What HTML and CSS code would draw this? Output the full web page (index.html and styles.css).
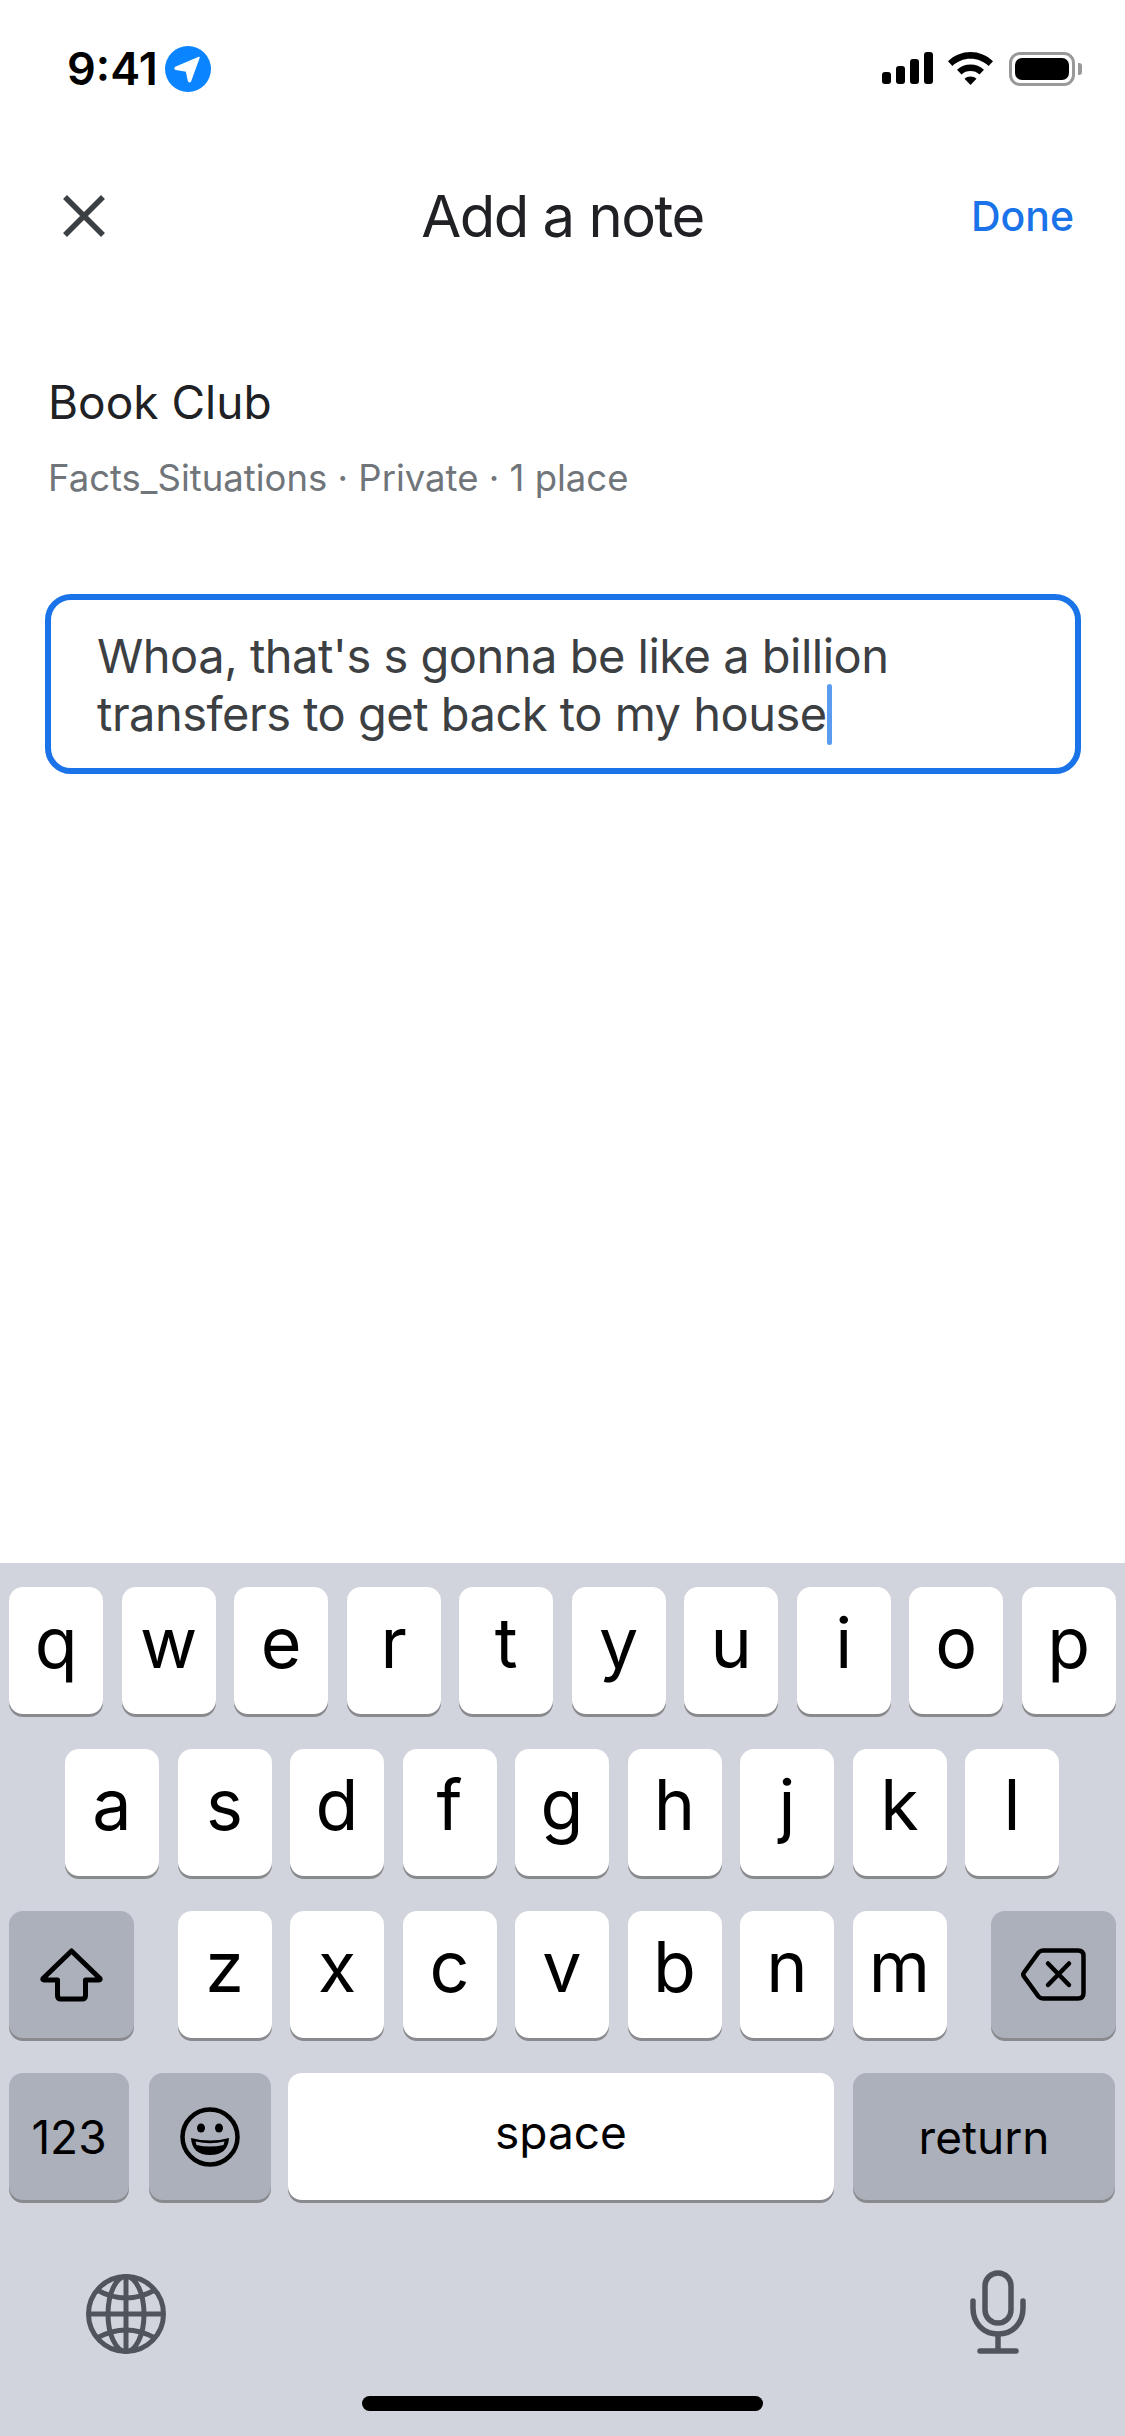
FILE: index.html
```html
<!DOCTYPE html>
<html lang="en">

<head>
    <meta charset="UTF-8">
    <meta name="viewport" content="width=device-width, initial-scale=1.0">
    <title>Add a note</title>
    <link rel="stylesheet" href="styles.css">
</head>

<body>
    <div class="screen">
        <div class="status-bar">
            <div class="status-left">
                <span class="clock">9:41</span>
                <svg class="location" width="46" height="46" viewBox="0 0 46 46">
                    <circle cx="23" cy="23" r="23" fill="#0a84ff" />
                    <path d="M34 11.5 L10.5 21.5 Q9.5 22.6 11 23.2 L21.5 25 L23.6 35 Q24.4 36.4 25.4 35.2 Z" fill="#fff" stroke="#fff" stroke-width="1.5" stroke-linejoin="round" />
                </svg>
            </div>
            <div class="status-right">
                <svg width="51" height="32" viewBox="0 0 51 32">
                    <rect x="0" y="20" width="9" height="12" rx="3" />
                    <rect x="14" y="14" width="9" height="18" rx="3" />
                    <rect x="28" y="7" width="9" height="25" rx="3" />
                    <rect x="42" y="0" width="9" height="32" rx="3" />
                </svg>
                <svg class="wifi" width="45" height="33" viewBox="0 0 45 33">
                    <path d="M22.5 0 C31 0 39 3.4 45 9.2 L40.6 14 C35.8 9.4 29.4 6.8 22.5 6.8 C15.6 6.8 9.2 9.4 4.4 14 L0 9.2 C6 3.4 14 0 22.5 0 Z" />
                    <path d="M22.5 12.4 C27.6 12.4 32.3 14.3 36 17.7 L31.5 22.4 C29.1 20.2 25.9 19 22.5 19 C19.1 19 15.9 20.2 13.5 22.4 L9 17.7 C12.7 14.3 17.4 12.4 22.5 12.4 Z" />
                    <path d="M22.5 24.5 C24.8 24.5 26.9 25.3 28.5 26.7 L22.5 33 L16.5 26.7 C18.1 25.3 20.2 24.5 22.5 24.5 Z" />
                </svg>
                <div class="battery">
                    <div class="battery-fill"></div>
                </div>
                <div class="battery-nub"></div>
            </div>
        </div>

        <div class="header">
            <svg class="close-icon" width="42" height="42" viewBox="0 0 42 42">
                <path d="M2 2 L40 40 M40 2 L2 40" fill="none" stroke="#3c4043" stroke-width="5.500" />
            </svg>
            <h1 class="title">Add a note</h1>
            <span class="done">Done</span>
        </div>

        <div class="list-info">
            <div class="list-name">Book Club</div>
            <div class="list-meta">Facts_Situations · Private · 1 place</div>
        </div>

        <div class="note-box">
            <span class="note-text">Whoa, that's s gonna be like a billion<br>transfers to get back to my house<span class="caret"></span></span>
        </div>

        <div class="keyboard">
            <div class="key-row">
                <div class="key">q</div>
                <div class="key">w</div>
                <div class="key">e</div>
                <div class="key">r</div>
                <div class="key">t</div>
                <div class="key">y</div>
                <div class="key">u</div>
                <div class="key">i</div>
                <div class="key">o</div>
                <div class="key">p</div>
            </div>
            <div class="key-row row-middle">
                <div class="key">a</div>
                <div class="key">s</div>
                <div class="key">d</div>
                <div class="key">f</div>
                <div class="key">g</div>
                <div class="key">h</div>
                <div class="key">j</div>
                <div class="key">k</div>
                <div class="key">l</div>
            </div>
            <div class="key-row row-spread">
                <div class="key key-fn key-shift">
                    <svg width="63" height="54" viewBox="0 0 63 54">
                        <path d="M31.500 3 L60 30.500 Q60.500 32 59 32 L45.500 32 L45.500 47.500 Q45.500 51 42 51 L21 51 Q17.500 51 17.500 47.500 L17.500 32 L4 32 Q2.500 32 3 30.500 Z" fill="none" stroke="#000" stroke-width="5" stroke-linejoin="round" />
                    </svg>
                </div>
                <div class="letter-group">
                    <div class="key">z</div>
                    <div class="key">x</div>
                    <div class="key">c</div>
                    <div class="key">v</div>
                    <div class="key">b</div>
                    <div class="key">n</div>
                    <div class="key">m</div>
                </div>
                <div class="key key-fn key-shift">
                    <svg width="65" height="53" viewBox="0 0 65 53">
                        <path d="M22 2.500 L57 2.500 Q62.500 2.500 62.500 8 L62.500 45 Q62.500 50.500 57 50.500 L22 50.500 Q19.500 50.500 17.500 48.500 L3 28.500 Q1.500 26.500 3 24.500 L17.500 4.500 Q19.500 2.500 22 2.500 Z" fill="none" stroke="#000" stroke-width="4.500" stroke-linejoin="round" />
                        <path d="M27 15.500 L48 37 M48 15.500 L27 37" fill="none" stroke="#000" stroke-width="4.500" stroke-linecap="round" />
                    </svg>
                </div>
            </div>
            <div class="key-row row-bottom">
                <div class="key key-fn key-label key-123">123</div>
                <div class="key key-fn key-emoji">
                    <svg width="60" height="60" viewBox="0 0 60 60">
                        <circle cx="30" cy="30" r="27.500" fill="none" stroke="#000" stroke-width="4.500" />
                        <ellipse cx="21" cy="21" rx="4" ry="4.500" />
                        <ellipse cx="39" cy="21" rx="4" ry="4.500" />
                        <path d="M11 31 Q30 36 49 31 Q48 48 30 48 Q12 48 11 31 Z" />
                        <path d="M15.500 34.500 Q30 38 44.500 34.500 L43.500 38 Q30 41 16.500 38 Z" fill="#abb0ba" />
                    </svg>
                </div>
                <div class="key key-label key-space">space</div>
                <div class="key key-fn key-label key-return">return</div>
            </div>
            <div class="kb-tools">
                <svg width="80" height="80" viewBox="0 0 80 80" fill="none" stroke="#50555c" stroke-width="5">
                    <circle cx="40" cy="40" r="37.500" />
                    <ellipse cx="40" cy="40" rx="18" ry="37.500" />
                    <path d="M40 2.500 V77.500 M2.500 40 H77.500" />
                    <path d="M11 16 Q40 32 69 16 M11 64 Q40 48 69 64" />
                </svg>
                <svg width="56" height="84" viewBox="0 0 56 84" fill="none" stroke="#50555c" stroke-width="5.500">
                    <rect x="15" y="3" width="26" height="50" rx="13" />
                    <path d="M3 31 V38 C3 53 13 64 28 64 C43 64 53 53 53 38 V31" stroke-linecap="round" />
                    <path d="M28 64 V81" />
                    <path d="M10 81 H46" stroke-linecap="round" />
                </svg>
            </div>
            <div class="home-indicator"></div>
        </div>
    </div>
</body>

</html>
```

FILE: styles.css
```css
* {
    box-sizing: border-box;
}

body {
    margin: 0;
    background: #fff;
    font-family: Inter, "Liberation Sans", sans-serif;
}

.screen {
    width: 1125px;
    height: 2436px;
    display: flex;
    flex-direction: column;
    overflow: hidden;
}

.status-bar {
    height: 92px;
    padding: 46px 43px 0 67px;
    display: flex;
    justify-content: space-between;
}

.status-left {
    display: flex;
    align-items: flex-start;
    gap: 7px;
}

.clock {
    font-size: 45px;
    line-height: 46px;
    font-weight: 600;
    color: #000;
}

.status-right {
    display: flex;
    align-items: flex-start;
    padding-top: 6px;
}

.wifi {
    margin-left: 15px;
}

.battery {
    width: 66px;
    height: 34px;
    margin-left: 16px;
    padding: 3px;
    border: 3px solid #999;
    border-radius: 11px;
}

.battery-fill {
    width: 100%;
    height: 100%;
    background: #000;
    border-radius: 7px;
}

.battery-nub {
    width: 4px;
    height: 12px;
    margin: 11px 0 0 3px;
    background: #999;
    border-radius: 0 3px 3px 0;
}

.header {
    margin-top: 103px;
    padding: 0 51px;
    height: 42px;
    display: grid;
    grid-template-columns: 1fr auto 1fr;
    align-items: center;
}

.close-icon {
    margin-left: 12px;
}

.title {
    margin: 0;
    font-size: 58px;
    line-height: 42px;
    font-weight: 400;
    letter-spacing: -1.500px;
    color: #202124;
}

.done {
    justify-self: end;
    font-size: 41px;
    line-height: 42px;
    font-weight: 500;
    color: #1a73e8;
}

.list-info {
    padding: 138px 48px 0;
}

.list-name {
    font-size: 46px;
    line-height: 54px;
    color: #202124;
}

.list-meta {
    margin-top: 28px;
    font-size: 36.500px;
    line-height: 42px;
    color: #70757a;
}

.note-box {
    margin: 95px 44px 0 45px;
    height: 180px;
    padding: 27px 46px 0;
    border: 6px solid #1a73e8;
    border-radius: 26px;
}

.note-text {
    display: block;
    font-size: 47px;
    line-height: 57px;
    letter-spacing: -0.500px;
    color: #3c4043;
}

.caret {
    display: inline-block;
    width: 5px;
    height: 61px;
    margin-bottom: -14px;
    background: #5a9cf0;
    border-radius: 3px;
}

.keyboard {
    margin-top: auto;
    height: 873px;
    padding-top: 24px;
    background: #d1d4dc;
}

.key-row {
    height: 127px;
    margin-bottom: 35px;
    padding: 0 9px;
    display: flex;
    justify-content: center;
    gap: 18.500px;
}

.row-middle {
    padding-right: 10px;
}

.letter-group {
    display: flex;
    gap: 18.500px;
    margin-right: 1px;
}

.row-spread {
    justify-content: space-between;
}

.row-bottom {
    justify-content: flex-start;
    gap: 0;
}

.key {
    width: 94px;
    height: 127px;
    padding-bottom: 16px;
    display: flex;
    align-items: center;
    justify-content: center;
    background: #fff;
    border-radius: 14px;
    box-shadow: 0 3px 0 #898a8d;
    font-size: 70px;
    color: #000;
}

.key-fn {
    background: #abb0ba;
}

.key-shift {
    width: 125px;
    padding-bottom: 0;
}

.key-label {
    font-size: 46px;
    padding-bottom: 0;
}

.key-123 {
    width: 120px;
}

.key-emoji {
    width: 122px;
    margin-left: 20px;
    padding-bottom: 0;
}

.key-space {
    width: 546px;
    margin-left: 17px;
    padding-bottom: 10px;
}

.key-return {
    width: 262px;
    margin-left: 19px;
}

.kb-tools {
    margin-top: 70px;
    padding: 0 99px 0 86px;
    display: flex;
    justify-content: space-between;
    align-items: flex-end;
}

.home-indicator {
    width: 401px;
    height: 15px;
    margin: 42px auto 0;
    background: #000;
    border-radius: 8px;
}
```
